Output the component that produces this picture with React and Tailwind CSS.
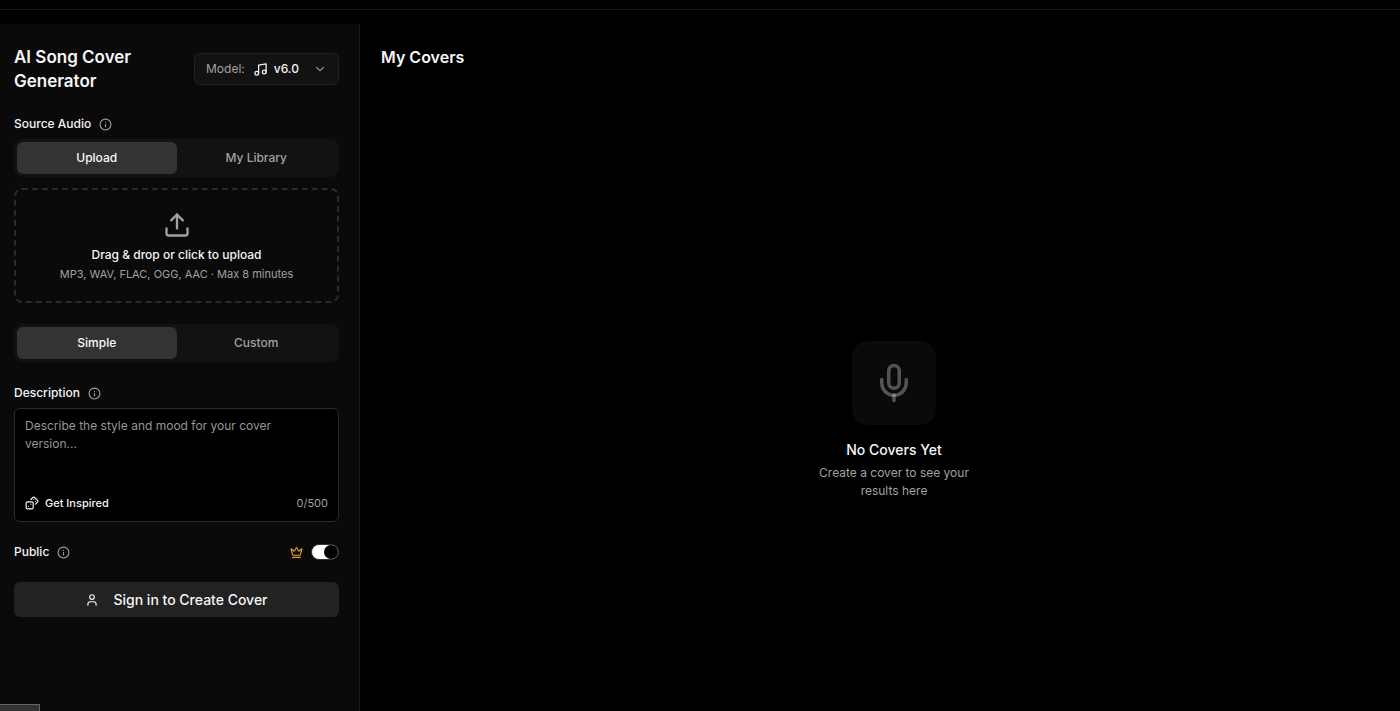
import { useState } from 'react';
import { ChevronDown, Crown, Dices, Info, Mic, Music, Upload, User } from 'lucide-react';

const Tabs = ({ name, items, active, onChange }) => (
  <div role="tablist" aria-label={name} className="grid grid-cols-2 rounded-lg bg-[#121212] p-[3px]">
    {items.map((item) => (
      <button
        key={item}
        type="button"
        role="tab"
        aria-selected={item === active}
        onClick={() => onChange(item)}
        className={
          item === active
            ? 'h-8 rounded-md bg-[#333333] text-[12px] font-medium text-[#fafafa]'
            : 'h-8 rounded-md text-[12px] font-medium text-[#a1a1a1]'
        }
      >
        {item}
      </button>
    ))}
  </div>
);

const InfoIcon = () => <Info size={13} className="text-[#a1a1a1]" aria-hidden="true" />;

const Sidebar = () => {
  const [source, setSource] = useState('Upload');
  const [mode, setMode] = useState('Simple');
  const [text, setText] = useState('');
  const [isPublic, setIsPublic] = useState(true);

  return (
    <aside className="flex w-[360px] shrink-0 flex-col border-r border-[#1a1a1a] bg-[#0a0a0a] pt-[21px] pr-5 pl-[14px]">
      <div className="flex items-center justify-between">
        <h1 className="w-[140px] text-[17px] leading-6 font-semibold">AI Song Cover Generator</h1>
        <button
          type="button"
          className="flex h-8 w-[145px] items-center rounded-md border border-[#222222] bg-[#121212] px-[11px] text-[12px]"
        >
          <span className="text-[#a1a1a1]">Model:</span>
          <Music size={15} className="ml-2" />
          <span className="ml-[6px] font-medium">v6.0</span>
          <ChevronDown size={14} className="ml-auto text-[#8a8a8a]" />
        </button>
      </div>

      <div className="mt-[22px] mb-[6px] flex h-[18px] items-center gap-2 text-[12px] font-medium">
        <span>Source Audio</span>
        <InfoIcon />
      </div>
      <Tabs name="Source Audio" items={['Upload', 'My Library']} active={source} onChange={setSource} />

      <button
        type="button"
        className="mt-[11px] flex h-[115px] flex-col items-center rounded-lg border-2 border-dashed border-[#2b2b2b] pt-[21px]"
      >
        <Upload size={28} className="text-[#a1a1a1]" />
        <span className="mt-[7px] text-[12px] leading-[18px] font-medium">Drag &amp; drop or click to upload</span>
        <span className="mt-[2px] text-[11px] leading-[16px] text-[#a1a1a1]">
          MP3, WAV, FLAC, OGG, AAC · Max 8 minutes
        </span>
      </button>

      <div className="mt-[21px]">
        <Tabs name="Mode" items={['Simple', 'Custom']} active={mode} onChange={setMode} />
      </div>

      <div className="mt-[22px] mb-[6px] flex h-[18px] items-center gap-2 text-[12px] font-medium">
        <label htmlFor="description">Description</label>
        <InfoIcon />
      </div>
      <div className="flex h-[114px] flex-col rounded-md border border-[#2b2b2b] bg-black px-[10px] pt-2 pb-[10px]">
        <textarea
          id="description"
          value={text}
          maxLength={500}
          onChange={(e) => setText(e.target.value)}
          placeholder="Describe the style and mood for your cover version..."
          className="w-full flex-1 resize-none bg-transparent pr-3 text-[12px] leading-[18px] outline-none placeholder:text-[#969696]"
        />
        <div className="flex h-4 items-center justify-between text-[11px]">
          <button type="button" className="flex items-center gap-[6px] font-medium">
            <Dices size={14} />
            Get Inspired
          </button>
          <span className="text-[#a1a1a1]">{text.length}/500</span>
        </div>
      </div>

      <div className="mt-[21px] flex h-[18px] items-center justify-between">
        <div className="flex items-center gap-2 text-[12px] font-medium">
          <label htmlFor="public">Public</label>
          <InfoIcon />
        </div>
        <div className="flex items-center gap-2">
          <Crown size={13} className="text-[#e2a42b]" />
          <input
            id="public"
            type="checkbox"
            role="switch"
            checked={isPublic}
            onChange={(e) => setIsPublic(e.target.checked)}
            className="flex h-4 w-7 appearance-none items-center rounded-full border border-[#333333] bg-[#333333] before:size-[14px] before:rounded-full before:bg-black checked:justify-end checked:bg-white"
          />
        </div>
      </div>

      <button
        type="button"
        className="mt-[21px] flex h-[35px] items-center justify-center gap-[14px] rounded-md bg-[#222222] text-[14px] font-medium"
      >
        <User size={14} />
        Sign in to Create Cover
      </button>
    </aside>
  );
};

const Covers = () => (
  <main className="flex flex-1 flex-col px-[21px] pt-[21px]">
    <h2 className="text-[16px] leading-[25px] font-semibold">My Covers</h2>
    <div className="flex flex-1 flex-col items-center justify-center pt-[60px] pl-7 text-center">
      <div className="flex size-[84px] items-center justify-center rounded-2xl bg-[#0a0a0a]">
        <Mic size={42} className="text-white/30" />
      </div>
      <h3 className="mt-[14px] text-[14px] leading-[22px] font-medium">No Covers Yet</h3>
      <p className="mt-[3px] w-[180px] text-[12px] leading-[18px] text-[#a1a1a1]">
        Create a cover to see your results here
      </p>
    </div>
  </main>
);

export default function App() {
  return (
    <div className="relative flex h-screen flex-col overflow-hidden bg-black font-['Inter',sans-serif] text-[#f5f5f5]">
      <header className="h-[10px] shrink-0 border-b border-[#1a1a1a]" />
      <div className="mt-[14px] flex flex-1">
        <Sidebar />
        <Covers />
      </div>
      <div className="absolute bottom-0 left-0 h-[7px] w-10 border-t border-r border-[#666666] bg-[#333333]" />
    </div>
  );
}
